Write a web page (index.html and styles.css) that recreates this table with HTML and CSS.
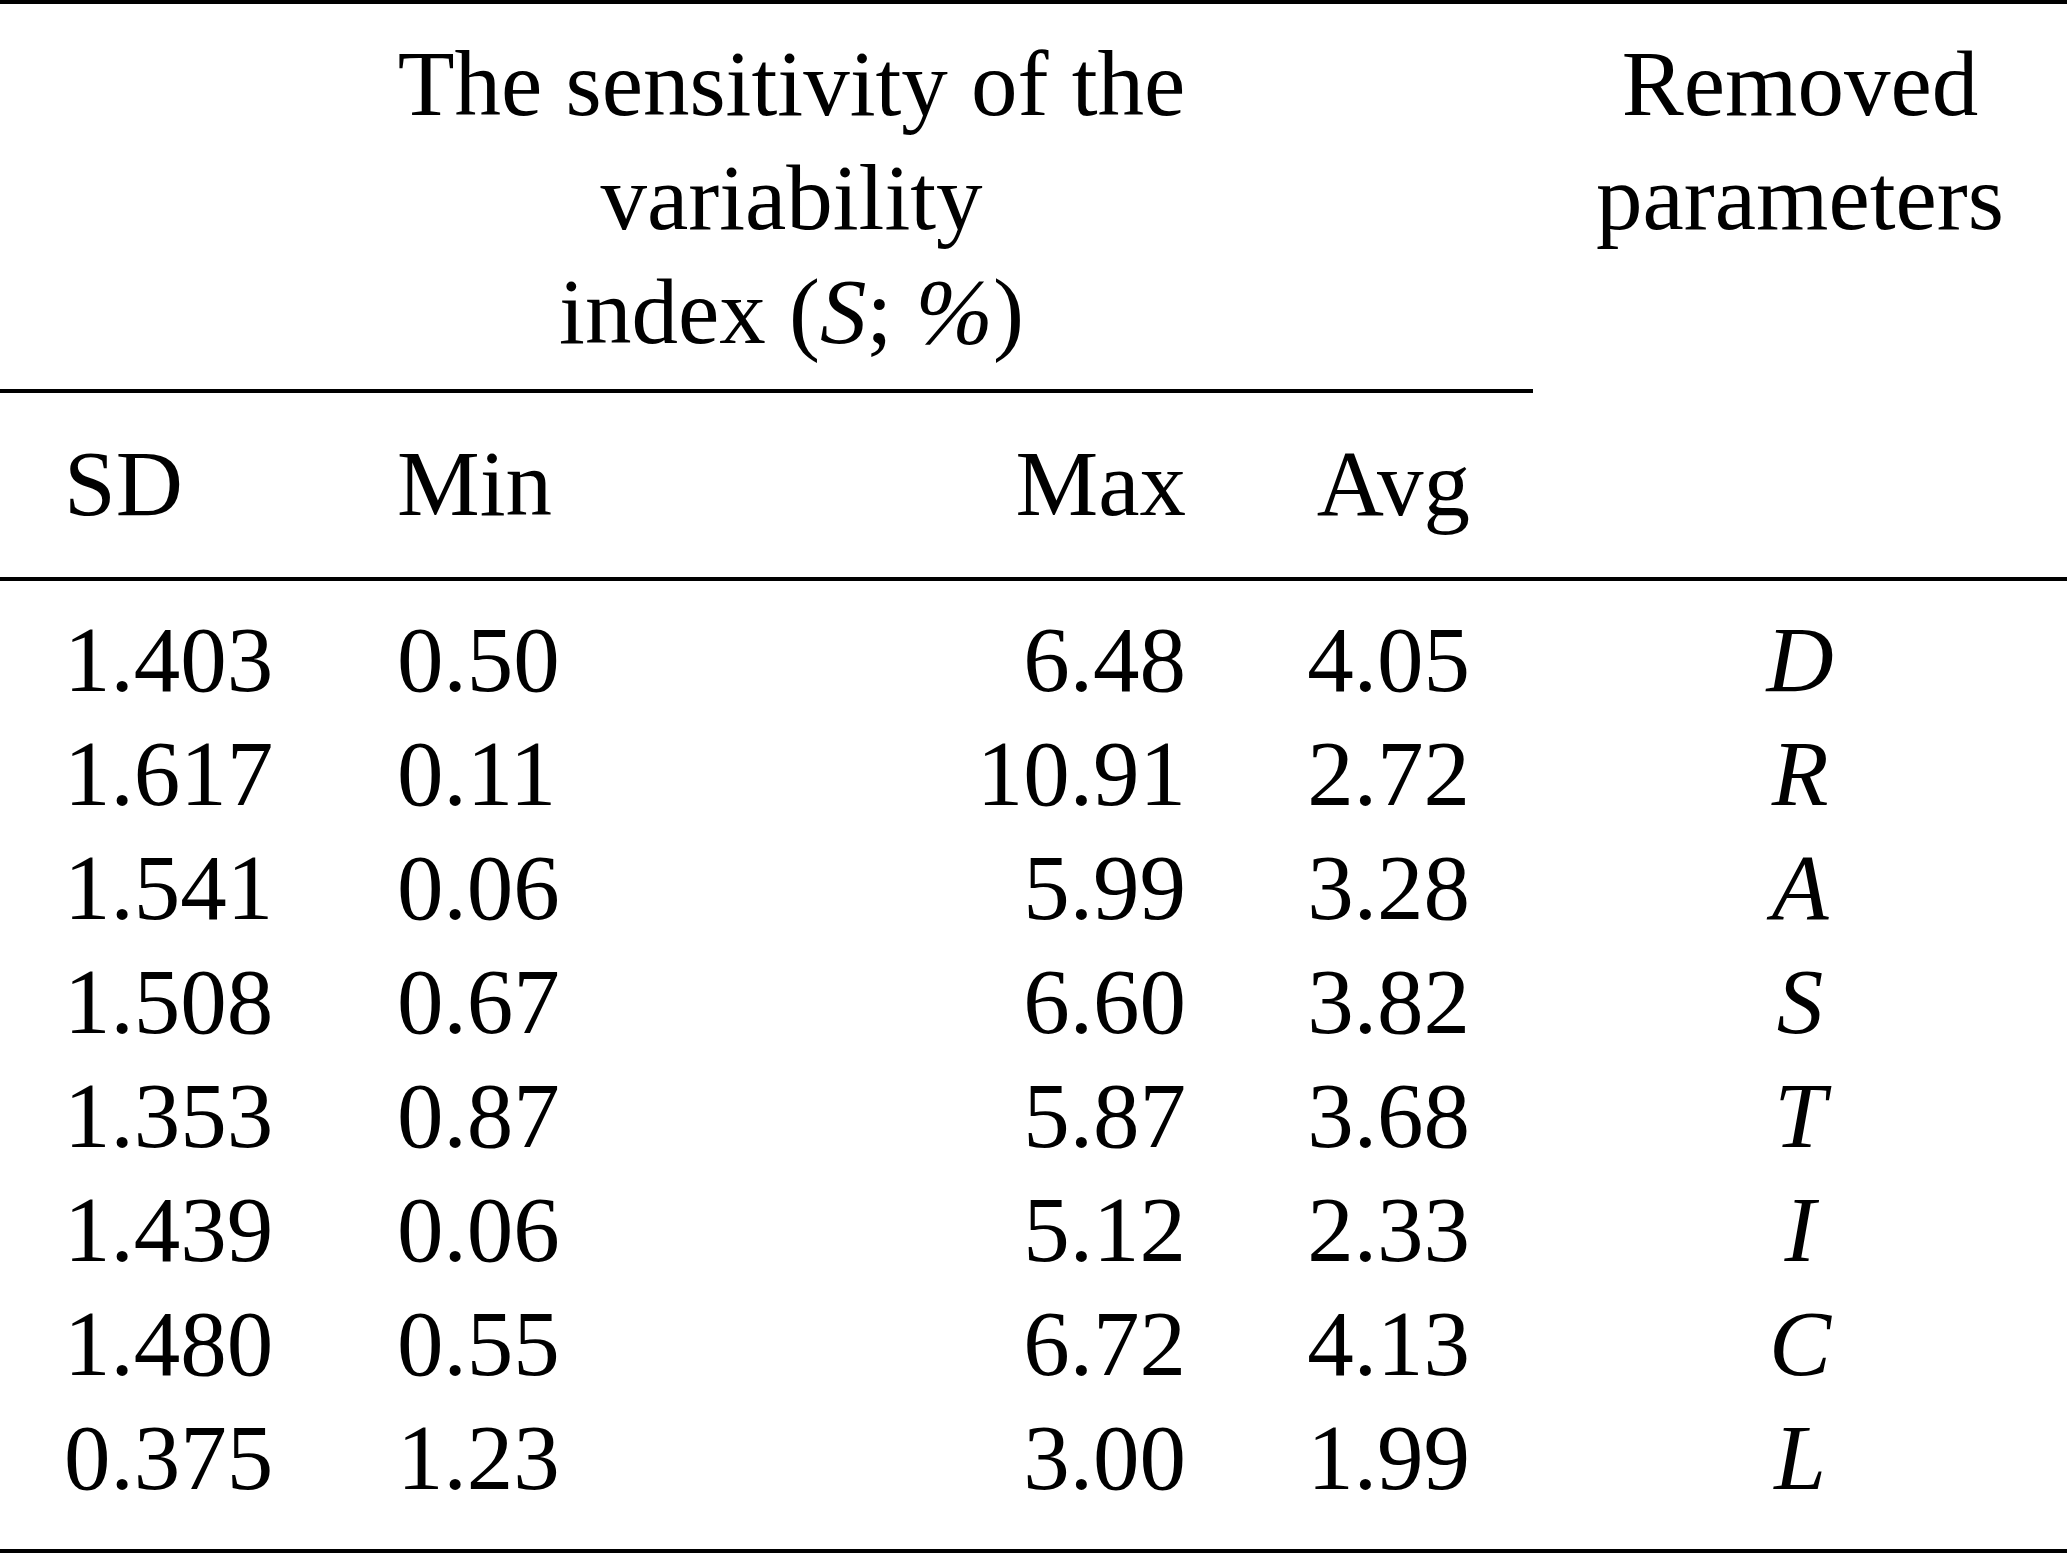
FILE: index.html
```html
<!DOCTYPE html>
<html lang="en">
<head>
<meta charset="utf-8">
<title>Sensitivity of the variability index</title>
<link rel="stylesheet" href="styles.css">
</head>
<body>
<table class="stats">
  <colgroup>
    <col class="c-sd">
    <col class="c-min">
    <col class="c-max">
    <col class="c-avg">
    <col class="c-rem">
  </colgroup>
  <thead>
    <tr class="head-top">
      <th colspan="4" class="group">The sensitivity of the<br>variability<br>index (<i>S</i>; <i>%</i>)</th>
      <th rowspan="2" class="rem">Removed<br>parameters</th>
    </tr>
    <tr class="head-sub">
      <th class="sd">SD</th>
      <th class="min">Min</th>
      <th class="max">Max</th>
      <th class="avg">Avg</th>
    </tr>
  </thead>
  <tbody>
    <tr><td class="sd">1.403</td><td class="min">0.50</td><td class="max">6.48</td><td class="avg">4.05</td><td class="rem"><i>D</i></td></tr>
    <tr><td class="sd">1.617</td><td class="min">0.11</td><td class="max">10.91</td><td class="avg">2.72</td><td class="rem"><i>R</i></td></tr>
    <tr><td class="sd">1.541</td><td class="min">0.06</td><td class="max">5.99</td><td class="avg">3.28</td><td class="rem"><i>A</i></td></tr>
    <tr><td class="sd">1.508</td><td class="min">0.67</td><td class="max">6.60</td><td class="avg">3.82</td><td class="rem"><i>S</i></td></tr>
    <tr><td class="sd">1.353</td><td class="min">0.87</td><td class="max">5.87</td><td class="avg">3.68</td><td class="rem"><i>T</i></td></tr>
    <tr><td class="sd">1.439</td><td class="min">0.06</td><td class="max">5.12</td><td class="avg">2.33</td><td class="rem"><i>I</i></td></tr>
    <tr><td class="sd">1.480</td><td class="min">0.55</td><td class="max">6.72</td><td class="avg">4.13</td><td class="rem"><i>C</i></td></tr>
    <tr><td class="sd">0.375</td><td class="min">1.23</td><td class="max">3.00</td><td class="avg">1.99</td><td class="rem"><i>L</i></td></tr>
  </tbody>
</table>
</body>
</html>
```
FILE: styles.css
```css
html, body {
  margin: 0;
  padding: 0;
  background: #ffffff;
}

body {
  font-family: "Liberation Serif", "Times New Roman", serif;
  font-size: 93px;
  line-height: 114px;
  color: #000000;
}

.stats {
  width: 2067px;
  table-layout: fixed;
  border-collapse: collapse;
  border-top: 4px solid #000;
  border-bottom: 4px solid #000;
}

.c-sd { width: 330px; }
.c-min { width: 550px; }
.c-max { width: 356px; }
.c-avg { width: 297px; }
.c-rem { width: 534px; }

.stats th,
.stats td {
  font-weight: normal;
  padding: 0;
  vertical-align: top;
  white-space: nowrap;
}

.stats thead {
  border-bottom: 4px solid #000;
}

.stats .head-top th {
  padding-top: 23px;
}

.stats .group {
  text-align: center;
  padding-left: 50px;
  padding-bottom: 20px;
  border-bottom: 4px solid #000;
}

.stats .head-sub th {
  padding-top: 34px;
  padding-bottom: 36px;
}

.stats .sd {
  text-align: left;
  padding-left: 64px;
}

.stats .min {
  text-align: left;
  padding-left: 67px;
}

.stats .max {
  text-align: right;
  padding-right: 50px;
}

.stats .avg {
  text-align: right;
  padding-right: 63px;
}

.stats .rem {
  text-align: center;
}

.stats tbody tr:first-child td {
  padding-top: 22px;
}

.stats tbody tr:last-child td {
  padding-bottom: 34px;
}
```
